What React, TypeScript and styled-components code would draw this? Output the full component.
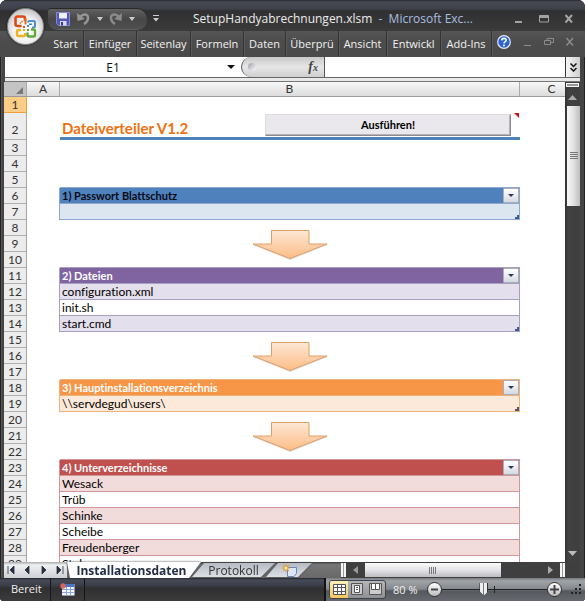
import React from "react";
import styled, { createGlobalStyle, css } from "styled-components";

const UI = '"Open Sans", "Noto Sans", sans-serif';
const CELL = 'Lato, "Open Sans", sans-serif';

const Global = createGlobalStyle`
  * { box-sizing: border-box; }
  body { margin: 0; background: #fff; font-family: ${UI}; font-size: 12px; }
  button, input { font: inherit; color: inherit; margin: 0; padding: 0; border: 0; background: none; }
  svg { display: block; flex: none; }
`;

const Frame = styled.div`
  height: 100vh;
  display: flex;
  flex-direction: column;
  overflow: hidden;
  border-radius: 7px 7px 4px 4px;
  background: #454545;
  box-shadow: inset 0 0 0 1px #222, inset 2px 0 0 #555;
`;

const Top = styled.header`
  position: relative;
  flex: none;
`;

const TitleBar = styled.div`
  height: 31px;
  display: flex;
  align-items: center;
  padding: 6px 4px 0 48px;
  color: #ececec;
  background: linear-gradient(#2a2b30 0, #464854 2px, #3e404a 9px, #303032 11px, #3b3b3b 100%);
`;

const OfficeButton = styled.button`
  position: absolute;
  left: 7px;
  top: 8px;
  width: 37px;
  height: 37px;
  border-radius: 50%;
  border: 1px solid #8b8b8b;
  background: radial-gradient(circle at 50% 60%, #fff 0, #f1f1f1 45%, #b9b9b9 85%, #dedede 100%);
  box-shadow: 0 0 2px #111;
  display: grid;
  place-items: center;
`;

const QuickAccess = styled.div`
  width: 99px;
  height: 20px;
  padding: 0 12px 0 8px;
  display: flex;
  align-items: center;
  justify-content: space-between;
  border-radius: 3px 10px 10px 10px;
  background: linear-gradient(#616161, #474747 50%, #505050);
  box-shadow: 0 1px 0 #5f5f5f, 0 -1px 0 #282828;
`;

const IconButton = styled.button<{ $w?: number }>`
  width: ${(p) => (p.$w ? `${p.$w}px` : "auto")};
  height: 18px;
  display: grid;
  place-items: center;
`;

const Title = styled.h1`
  flex: 1;
  margin: 0 0 0 29px;
  font-size: 12px;
  line-height: 20px;
  font-weight: 400;
  white-space: nowrap;
  span { color: #a9bfe0; }
`;

const WindowButtons = styled.div`
  display: grid;
  grid-template-columns: repeat(3, 25px);
`;

const Ribbon = styled.nav`
  height: 26px;
  padding: 0 8px 0 48px;
  display: flex;
  justify-content: space-between;
  background: linear-gradient(#555, #4c4c4c 40%, #4a4a4a);
`;

const Tabs = styled.div`
  display: grid;
  grid-template-columns: 36px 53px 54px 53px 42px 53px 48px 54px 51px;
`;

const RibbonTab = styled.button`
  color: #f2f2f2;
  font-size: 11px;
  line-height: 24px;
  height: 25px;
  border-right: 1px solid #333;
  box-shadow: 1px 0 0 #5a5a5a;
  white-space: nowrap;
`;

const RibbonTools = styled.div`
  flex: 1;
  display: flex;
  align-items: center;
  justify-content: space-between;
  padding: 0 2px 4px 5px;
`;

const FormulaBar = styled.div`
  margin: 0 5px;
  height: 20px;
  display: flex;
  background: #fff;
  flex: none;
`;

const NameBox = styled.div`
  width: 236px;
  display: flex;
  align-items: center;
  padding-right: 6px;
  input { flex: 1; min-width: 0; padding-right: 6px; text-align: center; font-size: 12px; color: #111; outline: 0; }
`;

const FxPill = styled.button`
  width: 84px;
  height: 20px;
  display: flex;
  align-items: center;
  justify-content: space-between;
  padding: 0 6px;
  border: 1px solid #555;
  border-width: 0 1px 0 1px;
  border-radius: 10px 0 0 10px;
  background: linear-gradient(#c9c9c9, #e6e6e6 50%, #cfcfcf);
  font: italic bold 14px/18px "Liberation Serif", serif;
  color: #444;
  small { font-size: 10px; }
`;

const Dot = styled.i`
  width: 8px;
  height: 8px;
  border-radius: 50%;
  background: linear-gradient(135deg, #9da0a8, #fff);
`;

const FormulaInput = styled.input`
  flex: 1;
  min-width: 0;
  outline: 0;
`;

const ExpandButton = styled.button`
  width: 15px;
  display: grid;
  place-items: center;
  background: linear-gradient(90deg, #f6f6f6, #cfcfcf);
  border-left: 1px solid #333;
`;

const Divider = styled.div`
  margin: 0 5px;
  height: 5px;
  flex: none;
  background: linear-gradient(#666 0 1px, #e9e9e9 1px 4px, #777 4px);
`;

const Main = styled.main`
  flex: 1;
  min-height: 0;
  margin: 0 5px 0 4px;
  display: flex;
`;

const Sheet = styled.div`
  flex: 1;
  overflow: hidden;
  background: #fff;
`;

const Grid = styled.table`
  width: 100%;
  table-layout: fixed;
  border-collapse: separate;
  border-spacing: 0;
  font-family: ${CELL};
  font-variant-ligatures: none;
  color: #000;
  td, th { padding: 0; }
`;

const ColA = styled.col`width: 33px;`;
const ColB = styled.col`width: 460px;`;
const ColHead = styled.col`width: 23px;`;

const ColumnHeader = styled.th`
  height: 15px;
  font-weight: 400;
  font-size: 12px;
  line-height: 14px;
  color: #333;
  background: linear-gradient(#f8f8f8, #dcdcdc);
  border-right: 1px solid #aaa;
  border-bottom: 1px solid #9a9a9a;
  &:last-child { border-right: 0; padding-left: 18px; }
`;

const Corner = styled(ColumnHeader)`
  background: #c4c4c4;
  svg { margin: 2px 3px 0 auto; }
`;

const RowHeader = styled.th<{ $h: number; $active?: boolean }>`
  height: ${(p) => p.$h}px;
  vertical-align: bottom;
  font-weight: 400;
  font-size: 12px;
  line-height: ${(p) => (p.$h > 16 ? 19 : 15)}px;
  color: #333;
  background: ${(p) => (p.$active ? "#fbcd86" : "#ececec")};
  border-right: 1px solid ${(p) => (p.$active ? "#e8a33c" : "#a5a5a5")};
  border-bottom: 1px solid ${(p) => (p.$active ? "#e8a33c" : "#b0b0b0")};
`;

const themes = {
  blue: { head: "#4f81bd", band: "#dce6f1", line: "#8ea9d0", text: "#0a0a14" },
  violet: { head: "#8064a2", band: "#e4dfec", line: "#a9a0c0", text: "#fff" },
  orange: { head: "#f79646", band: "#fde9d9", line: "#eeb27c", text: "#fff" },
  red: { head: "#c0504d", band: "#f2dcdb", line: "#cf979a", text: "#fff" },
};
type Tone = keyof typeof themes;

const Blank = styled.td`
  position: relative;
  height: 16px;
`;

const Guard = styled.td<{ $tone?: Tone }>`
  border-right: 1px solid ${(p) => (p.$tone ? themes[p.$tone].line : "transparent")};
`;

const DataCell = styled.td<{ $tone: Tone; $band?: boolean; $head?: boolean }>`
  position: relative;
  white-space: nowrap;
  font-size: 12px;
  line-height: 15px;
  height: 16px;
  border: 0 solid ${(p) => themes[p.$tone].line};
  border-width: 0 1px 1px 0;
  background: ${(p) => (p.$band ? themes[p.$tone].band : "#fff")};
  && { padding-left: 2px; }
  ${(p) =>
    p.$head &&
    css`
      background: ${themes[p.$tone].head};
      color: ${themes[p.$tone].text};
      font-weight: 700;
      font-size: 11px;
      box-shadow: 0 -1px 0 ${themes[p.$tone].line};
    `}
`;

const FilterButton = styled.button`
  position: absolute;
  right: 0;
  top: 0;
  width: 16px;
  height: 15px;
  display: grid;
  place-items: center;
  border: 1px solid #a9aeb8;
  border-radius: 1px;
  background: linear-gradient(#fff, #d5d9e2);
`;

const ResizeMark = styled.svg`
  position: absolute;
  right: 0;
  bottom: 0;
`;

const ArrowShape = styled.svg`
  position: absolute;
  left: 50%;
  top: 50%;
  transform: translate(-50%, -50%);
  overflow: visible;
  z-index: 1;
`;

const HeadingCell = styled.td`
  position: relative;
  border-bottom: 3px solid #4f81bd;
  height: 27px;
  > div { display: flex; align-items: center; justify-content: space-between; padding: 0 9px 0 2px; }
`;

const Heading = styled.h2`
  margin: 5px 0 0;
  font-size: 15px;
  line-height: 18px;
  font-weight: 700;
  color: #f07010;
  white-space: nowrap;
`;

const RunButton = styled.button`
  width: 246px;
  height: 22px;
  color: #000;
  font: 700 11px/18px ${CELL};
  background: #ebe8ed;
  border: 1px solid;
  border-color: #dcdade #8c8a90 #8c8a90 #dcdade;
  box-shadow: inset -1px -1px 0 #b5b2b8;
`;

const NoteMark = styled.svg`
  position: absolute;
  right: 1px;
  top: 0;
`;

const VScroll = styled.div`
  width: 15px;
  display: flex;
  flex-direction: column;
  background: linear-gradient(90deg, #333, #414141 3px, #3f3f3f);
`;

const SplitHandle = styled.i<{ $vertical?: boolean }>`
  flex: none;
  display: block;
  width: ${(p) => (p.$vertical ? 5 : 13)}px;
  height: ${(p) => (p.$vertical ? 14 : 4)}px;
  margin: ${(p) => (p.$vertical ? "1px 0" : "1px 1px")};
  border: 1px solid #f5f5f5;
  background: #999;
  border-width: ${(p) => (p.$vertical ? "0 2px" : "1px")};
`;

const ScrollArrow = styled.button<{ $horizontal?: boolean }>`
  flex: none;
  width: ${(p) => (p.$horizontal ? 19 : 15)}px;
  height: ${(p) => (p.$horizontal ? 16 : 18)}px;
  display: grid;
  place-items: center;
`;

const VThumb = styled.div`
  height: 100px;
  flex: none;
  margin: 0 0 0 2px;
  width: 13px;
  display: grid;
  place-items: center;
  background: linear-gradient(90deg, #f8f8f8, #e2e2e2 50%, #bdbdbd);
`;

const Spacer = styled.div`flex: 1;`;

const SheetBar = styled.div`
  flex: none;
  height: 16px;
  margin: 0 5px 0 4px;
  display: flex;
  background: linear-gradient(#454545 0 1px, #777 2px, #686868);
`;

const SheetNav = styled.div`
  width: 63px;
  display: grid;
  grid-template-columns: repeat(4, 1fr);
  background: linear-gradient(#aaa, #eef0f2 3px, #cdd0d4);
`;

const NavButton = styled.button`
  display: grid;
  place-items: center;
`;

const SheetTab = styled.button<{ $active?: boolean; $w: number }>`
  position: relative;
  z-index: ${(p) => (p.$active ? 2 : 1)};
  width: ${(p) => p.$w}px;
  height: 16px;
  margin-left: ${(p) => (p.$active ? 0 : -9)}px;
  padding-right: ${(p) => (p.$active ? 5 : 0)}px;
  display: grid;
  place-items: center;
  color: ${(p) => (p.$active ? "#222e44" : "#333")};
  font-size: 12px;
  font-weight: ${(p) => (p.$active ? 700 : 400)};
  line-height: 15px;
  white-space: nowrap;
  filter: drop-shadow(0 0 1px #444);
  &::before {
    content: "";
    position: absolute;
    z-index: -1;
    inset: ${(p) => (p.$active ? "0" : "1px 0")};
    background: ${(p) => (p.$active ? "#fff" : "linear-gradient(#b5bac3, #dde0e5)")};
    clip-path: ${(p) =>
      p.$active
        ? "polygon(0 0, 100% 0, calc(100% - 12px) 100%, 3px 100%)"
        : "polygon(12px 0, 100% 0, calc(100% - 14px) 100%, 0 100%)"};
  }
`;

const HScroll = styled.div`
  flex: 1;
  display: flex;
  margin-left: 29px;
  background: #3f3f3f;
`;

const HThumb = styled.div`
  width: 136px;
  margin: 1px 0;
  display: grid;
  place-items: center;
  background: linear-gradient(#fafafa, #e4e4e8 50%, #bcbcc2);
`;

const StatusBar = styled.footer`
  flex: none;
  height: 23px;
  padding-left: 4px;
  display: flex;
  color: #f0f0f0;
  background: linear-gradient(#23252b 0, #474b58 2px, #393c45 8px, #303032 10px, #3b3b3c);
`;

const StatusText = styled.span`
  width: 47px;
  padding-left: 7px;
  line-height: 21px;
  font-size: 11px;
  border-right: 1px solid #161616;
`;

const StatusIcon = styled.button`
  width: 34px;
  display: grid;
  place-items: center;
  border-right: 1px solid #161616;
`;

const StatusRight = styled.div`
  width: 261px;
  display: flex;
  align-items: center;
  padding: 0 2px 1px 3px;
  border-left: 2px solid #111;
  background: linear-gradient(#777b80 0, #a1a4a7 3px, #85888c 11px, #55595e 13px, #666a70);
`;

const Views = styled.div`
  display: grid;
  grid-template-columns: repeat(3, 1fr);
  width: 57px;
  height: 19px;
  border: 1px solid #404347;
  border-radius: 3px;
  overflow: hidden;
  background: linear-gradient(#b5b7b9, #8e9194);
`;

const ViewButton = styled.button<{ $active?: boolean }>`
  display: grid;
  place-items: center;
  background: ${(p) => (p.$active ? "linear-gradient(#fff0bc, #f6c65a)" : "none")};
`;

const Zoom = styled.span`
  width: 41px;
  padding-left: 7px;
  font-size: 11px;
  white-space: nowrap;
`;

const RoundButton = styled.button`
  flex: none;
  width: 15px;
  height: 15px;
  border-radius: 50%;
  border: 1px solid #333;
  background: linear-gradient(#fff, #bbb);
  display: grid;
  place-items: center;
`;

const ZoomRange = styled.input`
  appearance: none;
  flex: 1;
  min-width: 0;
  height: 15px;
  background: linear-gradient(#222, #222) 52px 50% / 1px 7px no-repeat, linear-gradient(#222, #222) 0 50% / 100% 1px no-repeat;
  &::-webkit-slider-thumb {
    appearance: none;
    width: 9px;
    height: 12px;
    border: 0;
    clip-path: polygon(0 0, 100% 0, 100% 8px, 5px 100%, 4px 100%, 0 8px);
    background: linear-gradient(90deg, #333 1px, #eee 1px 4px, #777 4px 5px, #eee 5px 8px, #333 8px);
  }
`;

const Down = ({ w = 7, h = 4, c = "#111" }: { w?: number; h?: number; c?: string }) => (
  <svg width={w} height={h} viewBox="0 0 8 4" preserveAspectRatio="none">
    <path d="M0 0h8L4 4z" fill={c} />
  </svg>
);

const OfficeLogo = () => (
  <svg width="25" height="25" viewBox="0 0 25 25" fill="none" strokeWidth="2.6" strokeLinejoin="round">
    <path d="M8.500 12H4.500a2 2 0 0 1-2-2V4.500a2 2 0 0 1 2-2H10a2 2 0 0 1 2 2V7" stroke="#dc4a16" />
    <path d="M12.500 10.500V4.500" stroke="#e9701c" strokeWidth="2" />
    <path d="M15 8.500a1.500 1.500 0 0 1 1.500-1.500h4A1.500 1.500 0 0 1 22 8.500V12a1.500 1.500 0 0 1-1.500 1.500H19" stroke="#4b92d6" strokeWidth="2" />
    <path d="M10 22H5.500A1.500 1.500 0 0 1 4 20.500v-3A1.500 1.500 0 0 1 5.500 16H8m4 3v1.500a1.500 1.500 0 0 1-2 1.500" stroke="#f0b321" strokeWidth="2.400" />
    <path d="M14.500 18.500V21a1.500 1.500 0 0 0 1.500 1.500h4.500A1.500 1.500 0 0 0 22 21v-4a1.500 1.500 0 0 0-1.500-1.500H18" stroke="#65a83a" strokeWidth="2.400" />
    <path d="M8 7.500h2M7.500 8v2" stroke="#e98b4b" strokeWidth="1.500" />
    <g stroke="none">
      <path fill="#e55a21" d="M10 12h2v2h-2z" />
      <path fill="#3e86ce" d="M14 11h2v2h-2zM16 9.500h3v1.500h-3z" />
      <path fill="#f0a020" d="M10 15h2v2h-2z" />
      <path fill="#5fa43a" d="M14 15h2v2h-2z" />
    </g>
  </svg>
);

const Save = () => (
  <svg width="14" height="14" viewBox="0 0 14 14">
    <path d="M.5.500h13v13h-11l-2-2z" fill="#5057b9" stroke="#8389da" />
    <path d="M3 1h8v5.500H3z" fill="#eef0fb" />
    <path d="M4 9h6.500v4.500H4z" fill="#d9dcf2" />
    <path d="M5 10h2v3.500H5z" fill="#343a8e" />
  </svg>
);

const Undo = ({ flip }: { flip?: boolean }) => (
  <svg width="13" height="13" viewBox="0 0 13 13">
    <g transform={flip ? "matrix(-1 0 0 1 13 0)" : undefined}>
      <path d="M3 5.500C5.500 1.500 11.500 1 11 6.500c-.2 2.500-1.800 4.200-4 5.500" fill="none" stroke={flip ? "#8a8a8a" : "#949494"} strokeWidth="2.600" />
      <path d="M0 1 .5 9l7.500-2z" fill={flip ? "#8a8a8a" : "#949494"} />
    </g>
  </svg>
);

const Help = () => (
  <svg width="14" height="14" viewBox="0 0 14 14">
    <circle cx="7" cy="7" r="6.300" fill="#2c63cf" stroke="#e3ebf8" strokeWidth="1.200" />
    <path d="M4.800 5.400C4.900 2.700 9.300 2.800 9.200 5.200 9.100 6.600 7 6.700 7 8.500" fill="none" stroke="#fff" strokeWidth="1.600" />
    <circle cx="7" cy="10.500" r="1" fill="#fff" />
  </svg>
);

const WinIcon = ({ kind, dim }: { kind: "min" | "max" | "restore" | "close"; dim?: boolean }) => (
  <svg width="10" height="10" viewBox="0 0 10 10" fill="none" stroke={dim ? "#8c8c8c" : "#a3a3a3"}>
    {kind === "min" && <path d={dim ? "M2 8.500h7" : "M1 8h7"} strokeWidth={dim ? 1 : 2} />}
    {kind === "max" && <path d="M.5 1.500h9v6.500h-9zM0 2.500h10M0 3.500h10" />}
    {kind === "restore" && <path d="M.5 3.500h6v4h-6zM3 3V1.500h6.500v4H7" />}
    {kind === "close" && <path d="m1.500 1 6.500 7.500M8 1 1.500 8.500" strokeWidth={dim ? 1.5 : 2} />}
  </svg>
);

const Arrow = () => (
  <ArrowShape width="76" height="28" viewBox="0 0 76 28" aria-label="Pfeil nach unten">
    <defs>
      <linearGradient id="peach" x1="0" y1="0" x2="0" y2="1">
        <stop offset="0" stopColor="#fde7d4" />
        <stop offset="1" stopColor="#fdbd86" />
      </linearGradient>
    </defs>
    <path d="M20 2h37v13h18L38 30 1 15h19z" fill="#999" opacity=".35" />
    <path d="M19.500.5h37.500V14h18L38 28.500 1 14h18.500z" fill="url(#peach)" stroke="#dd9f68" />
  </ArrowShape>
);

const Corner3 = ({ c }: { c: string }) => (
  <ResizeMark width="4" height="4" viewBox="0 0 4 4"><path d="M4 0v4H0V2h2V0z" fill={c} /></ResizeMark>
);

type Row =
  | { n: number; kind: "blank" | "arrow" | "title" }
  | { n: number; kind: "head" | "data"; tone: Tone; text: string; band?: boolean; end?: boolean };

const rows: Row[] = [
  { n: 1, kind: "blank" },
  { n: 2, kind: "title" },
  { n: 3, kind: "blank" },
  { n: 4, kind: "blank" },
  { n: 5, kind: "blank" },
  { n: 6, kind: "head", tone: "blue", text: "1) Passwort Blattschutz" },
  { n: 7, kind: "data", tone: "blue", text: "", band: true, end: true },
  { n: 8, kind: "blank" },
  { n: 9, kind: "arrow" },
  { n: 10, kind: "blank" },
  { n: 11, kind: "head", tone: "violet", text: "2) Dateien" },
  { n: 12, kind: "data", tone: "violet", text: "configuration.xml", band: true },
  { n: 13, kind: "data", tone: "violet", text: "init.sh" },
  { n: 14, kind: "data", tone: "violet", text: "start.cmd", band: true, end: true },
  { n: 15, kind: "blank" },
  { n: 16, kind: "arrow" },
  { n: 17, kind: "blank" },
  { n: 18, kind: "head", tone: "orange", text: "3) Hauptinstallationsverzeichnis" },
  { n: 19, kind: "data", tone: "orange", text: "\\\\servdegud\\users\\", band: true, end: true },
  { n: 20, kind: "blank" },
  { n: 21, kind: "arrow" },
  { n: 22, kind: "blank" },
  { n: 23, kind: "head", tone: "red", text: "4) Unterverzeichnisse" },
  { n: 24, kind: "data", tone: "red", text: "Wesack", band: true },
  { n: 25, kind: "data", tone: "red", text: "Trüb" },
  { n: 26, kind: "data", tone: "red", text: "Schinke", band: true },
  { n: 27, kind: "data", tone: "red", text: "Scheibe" },
  { n: 28, kind: "data", tone: "red", text: "Freudenberger", band: true },
  { n: 29, kind: "data", tone: "red", text: "Stuber" },
];

const BodyCell = ({ row }: { row: Row }) => {
  switch (row.kind) {
    case "title":
      return (
        <HeadingCell>
          <div>
            <Heading>Dateiverteiler V1.2</Heading>
            <RunButton>Ausführen!</RunButton>
          </div>
          <NoteMark width="5" height="5" viewBox="0 0 5 5"><path d="M0 0h5v5z" fill="#c8141c" /></NoteMark>
        </HeadingCell>
      );
    case "head":
      return (
        <DataCell $tone={row.tone} $head>
          {row.text}
          <FilterButton aria-label={`${row.text} filtern`}><Down w={6} h={3} c="#28395c" /></FilterButton>
        </DataCell>
      );
    case "data":
      return (
        <DataCell $tone={row.tone} $band={row.band}>
          {row.text}
          {row.end && <Corner3 c={row.tone === "orange" ? "#5d5266" : "#40589c"} />}
        </DataCell>
      );
    default:
      return <Blank>{row.kind === "arrow" && <Arrow />}</Blank>;
  }
};

const navPaths = [
  ["Erstes Blatt", "M1 0v8M7 0v8L3 4z"],
  ["Vorheriges Blatt", "M6 0v8L2 4z"],
  ["Nächstes Blatt", "M3 0v8l4-4z"],
  ["Letztes Blatt", "M8 0v8M2 0v8l4-4z"],
];

export default function App() {
  return (
    <>
      <Global />
      <Frame>
        <Top>
          <TitleBar>
            <QuickAccess>
              <IconButton aria-label="Speichern"><Save /></IconButton>
              <IconButton aria-label="Rückgängig"><Undo /></IconButton>
              <IconButton aria-label="Rückgängig Liste"><Down w={6} h={4} c="#ccc" /></IconButton>
              <IconButton aria-label="Wiederholen"><Undo flip /></IconButton>
              <IconButton aria-label="Wiederholen Liste"><Down w={6} h={4} c="#ccc" /></IconButton>
            </QuickAccess>
            <IconButton $w={17} aria-label="Symbolleiste anpassen">
              <svg width="6" height="7" viewBox="0 0 6 7"><path d="M0 0h6v1H0zM0 3h6L3 6.500z" fill="#ccc" /></svg>
            </IconButton>
            <Title>SetupHandyabrechnungen.xlsm <span>&nbsp;-&nbsp; Microsoft Exc...</span></Title>
            <WindowButtons>
              <IconButton aria-label="Minimieren"><WinIcon kind="min" /></IconButton>
              <IconButton aria-label="Maximieren"><WinIcon kind="max" /></IconButton>
              <IconButton aria-label="Schließen"><WinIcon kind="close" /></IconButton>
            </WindowButtons>
          </TitleBar>
          <Ribbon>
            <Tabs>
              {["Start", "Einfüger", "Seitenlay", "Formeln", "Daten", "Überprü", "Ansicht", "Entwickl", "Add-Ins"].map((t) => (
                <RibbonTab key={t}>{t}</RibbonTab>
              ))}
            </Tabs>
            <RibbonTools>
              <IconButton aria-label="Hilfe"><Help /></IconButton>
              <IconButton aria-label="Mappe minimieren"><WinIcon kind="min" dim /></IconButton>
              <IconButton aria-label="Mappe wiederherstellen"><WinIcon kind="restore" dim /></IconButton>
              <IconButton aria-label="Mappe schließen"><WinIcon kind="close" dim /></IconButton>
            </RibbonTools>
          </Ribbon>
          <OfficeButton aria-label="Office"><OfficeLogo /></OfficeButton>
        </Top>
        <FormulaBar>
          <NameBox>
            <input aria-label="Namenfeld" defaultValue="E1" />
            <IconButton aria-label="Namen anzeigen"><Down w={8} h={4} /></IconButton>
          </NameBox>
          <FxPill aria-label="Funktion einfügen"><Dot /><span>f<small>x</small></span></FxPill>
          <FormulaInput aria-label="Bearbeitungsleiste" />
          <ExpandButton aria-label="Bearbeitungsleiste erweitern">
            <svg width="7" height="9" viewBox="0 0 7 9" fill="none" stroke="#111" strokeWidth="1.500"><path d="m.5.500 3 3 3-3M.5 5l3 3 3-3" /></svg>
          </ExpandButton>
        </FormulaBar>
        <Divider />
        <Main>
          <Sheet>
            <Grid>
              <colgroup><ColHead /><ColA /><ColB /><col /></colgroup>
              <thead>
                <tr>
                  <Corner aria-label="Alles markieren"><svg width="7" height="7" viewBox="0 0 7 7"><path d="M7 0v7H0z" fill="#777" /></svg></Corner>
                  <ColumnHeader>A</ColumnHeader>
                  <ColumnHeader>B</ColumnHeader>
                  <ColumnHeader>C</ColumnHeader>
                </tr>
              </thead>
              <tbody>
                {rows.map((row) => (
                  <tr key={row.n}>
                    <RowHeader $h={row.kind === "title" ? 27 : 16} $active={row.n === 1}>{row.n}</RowHeader>
                    <Guard $tone={"tone" in row ? row.tone : undefined} />
                    <BodyCell row={row} />
                    <td />
                  </tr>
                ))}
              </tbody>
            </Grid>
          </Sheet>
          <VScroll>
            <SplitHandle />
            <ScrollArrow aria-label="Nach oben"><svg width="9" height="5" viewBox="0 0 9 5"><path d="M0 5h9L4.500 0z" fill="#aaa" /></svg></ScrollArrow>
            <VThumb>
              <svg width="8" height="8" viewBox="0 0 8 8"><path d="M0 .5h8M0 2.500h8M0 4.500h8M0 6.500h8" stroke="#777" /></svg>
            </VThumb>
            <Spacer />
            <ScrollArrow aria-label="Nach unten"><Down w={9} h={5} c="#bbb" /></ScrollArrow>
          </VScroll>
        </Main>
        <SheetBar>
          <SheetNav>
            {navPaths.map(([label, d]) => (
              <NavButton key={label} aria-label={label}>
                <svg width="9" height="8" viewBox="0 0 9 8"><path d={d} fill="#26303f" stroke="#26303f" strokeWidth=".8" /></svg>
              </NavButton>
            ))}
          </SheetNav>
          <SheetTab $active $w={134}>Installationsdaten</SheetTab>
          <SheetTab $w={83}>Protokoll</SheetTab>
          <SheetTab $w={46} aria-label="Tabellenblatt einfügen">
            <svg width="15" height="13" viewBox="0 0 15 13">
              <path d="M5.500 3.500h9v6l-2.500 3H5.500z" fill="#dbe7f8" stroke="#6d87b5" />
              <path d="M4 0v8M0 4h8M1.200 1.200l5.600 5.600M6.800 1.200 1.200 6.800" stroke="#e79a2c" strokeWidth="1.200" />
              <circle cx="4" cy="4" r="1.500" fill="#fff3b8" />
            </svg>
          </SheetTab>
          <HScroll>
            <SplitHandle $vertical />
            <ScrollArrow $horizontal aria-label="Nach links"><svg width="5" height="8" viewBox="0 0 5 8"><path d="M5 0v8L0 4z" fill="#999" /></svg></ScrollArrow>
            <HThumb>
              <svg width="8" height="7" viewBox="0 0 8 7"><path d="M.5 0v7M2.500 0v7M4.500 0v7M6.500 0v7" stroke="#777" /></svg>
            </HThumb>
            <Spacer />
            <ScrollArrow $horizontal aria-label="Nach rechts"><svg width="5" height="8" viewBox="0 0 5 8"><path d="M0 0v8l5-4z" fill="#aaa" /></svg></ScrollArrow>
            <SplitHandle $vertical />
            <ScrollArrow as="i" />
          </HScroll>
        </SheetBar>
        <StatusBar>
          <StatusText>Bereit</StatusText>
          <StatusIcon aria-label="Makro aufzeichnen">
            <svg width="15" height="13" viewBox="0 0 15 13">
              <path d="M2 1h12.500v11.500H2z" fill="#f3f6fc" />
              <path d="M2 1h12.500v3H2z" fill="#4b74c8" />
              <path d="M2 6.500h12.500M2 9.500h12.500M6.500 4v8.500M10.500 4v8.500" stroke="#8ba5d8" />
              <circle cx="3" cy="3" r="2.700" fill="#d8655a" />
            </svg>
          </StatusIcon>
          <Spacer />
          <StatusRight>
            <Views>
              <ViewButton $active aria-label="Normal"><svg width="13" height="11" viewBox="0 0 13 11"><path d="M.5.500h12v10H.5zM.5 3.500h12M.5 7.500h12M4.500.500v10M8.500.500v10" fill="#fff" stroke="#555" /></svg></ViewButton>
              <ViewButton aria-label="Seitenlayout"><svg width="12" height="12" viewBox="0 0 12 12"><path d="M.5.500h11v11H.5z" fill="#ccc" stroke="#555" /><path d="M3.500 2.500h5v7h-5zM5 4.500h2M5 6.500h2" fill="#fff" stroke="#555" /></svg></ViewButton>
              <ViewButton aria-label="Umbruchvorschau"><svg width="13" height="12" viewBox="0 0 13 12"><path d="M.5.500h12v11H.5z" fill="#ccc" stroke="#555" /><path d="M2.500.500h4v6h-4zM6.500.500h4v6h-4z" fill="#fff" stroke="#555" /></svg></ViewButton>
            </Views>
            <Zoom>80 %</Zoom>
            <RoundButton aria-label="Verkleinern"><svg width="7" height="7"><path d="M0 3.500h7" stroke="#444" strokeWidth="2" /></svg></RoundButton>
            <ZoomRange type="range" min="0" max="100" defaultValue="39" aria-label="Zoom" />
            <RoundButton aria-label="Vergrößern"><svg width="9" height="9"><path d="M0 4.500h9M4.500 0v9" stroke="#444" strokeWidth="2" /></svg></RoundButton>
            <svg width="21" height="14" viewBox="0 0 21 14"><path d="M17 2h2v2h-2zM13 6h2v2h-2zM17 6h2v2h-2zM9 10h2v2H9zM13 10h2v2h-2zM17 10h2v2h-2z" fill="#222" /></svg>
          </StatusRight>
        </StatusBar>
      </Frame>
    </>
  );
}
